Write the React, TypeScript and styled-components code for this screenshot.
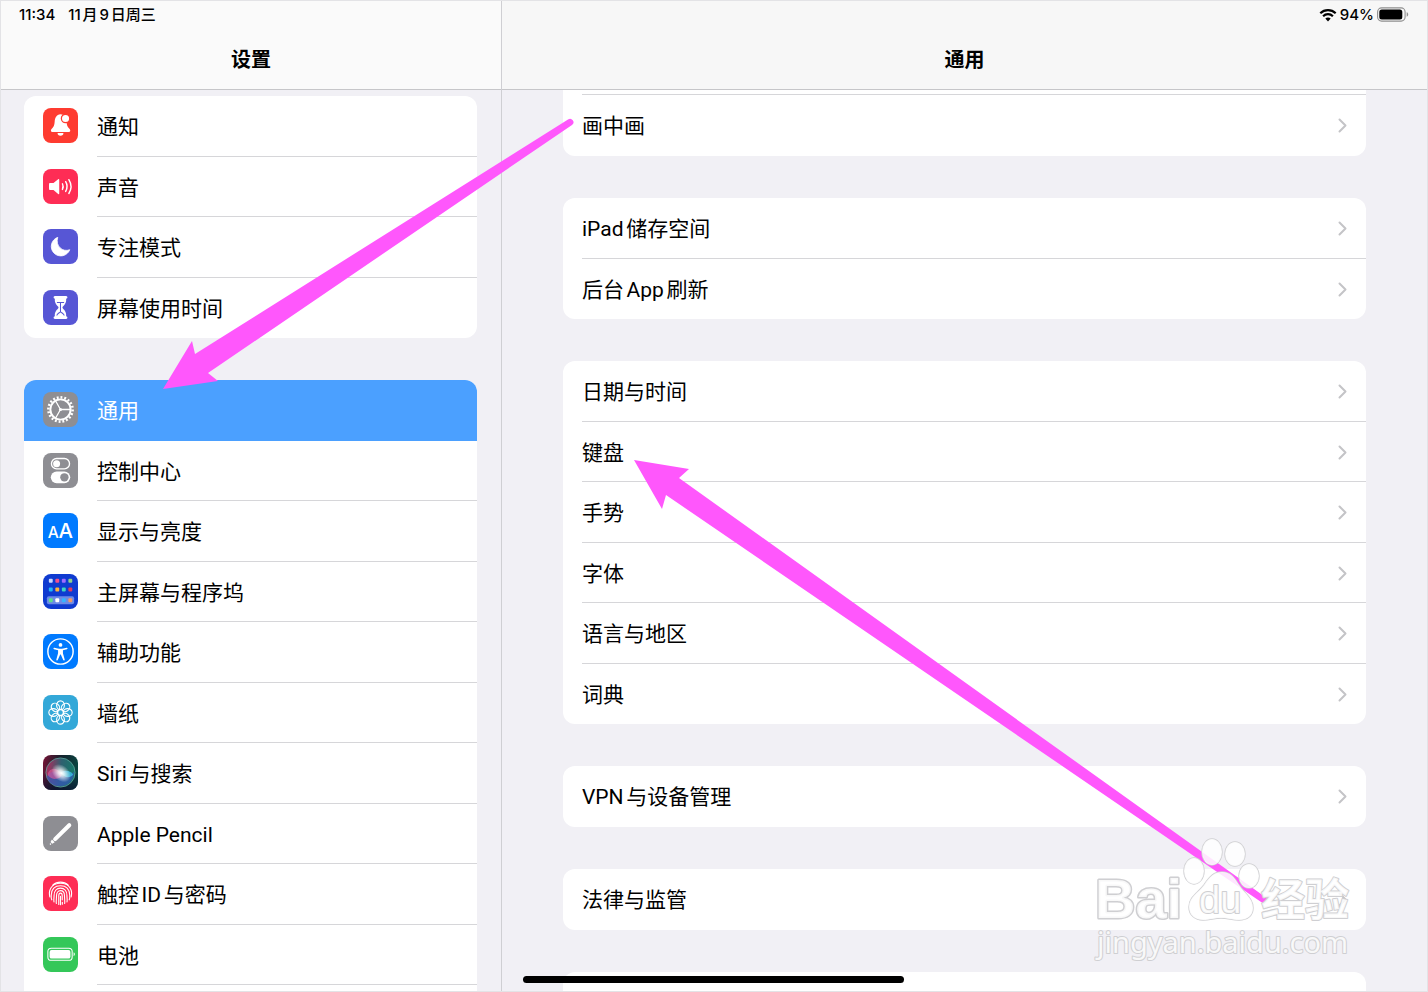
import React from 'react';
import styled, { createGlobalStyle } from 'styled-components';

const GlobalStyle = createGlobalStyle`
  *, *::before, *::after { box-sizing: border-box; }
  body {
    margin: 0;
    font-family: Inter, "Noto Sans CJK SC", sans-serif;
    color: #000;
    -webkit-font-smoothing: antialiased;
  }
  ul { list-style: none; margin: 0; padding: 0; }
`;

const Screen = styled.div`
  position: relative;
  display: flex;
  height: 100vh;
  overflow: hidden;
  border: 1px solid #e3e3e6;
  background: #f1f0f5;
`;

const Sidebar = styled.nav`
  display: flex;
  flex-direction: column;
  flex: 0 0 501px;
  border-right: 1px solid #cfcfd3;
`;

const Detail = styled.main`
  display: flex;
  flex-direction: column;
  flex: 1;
  min-width: 0;
`;

const Header = styled.header<{ $tone: string }>`
  flex: 0 0 89px;
  background: ${(p) => p.$tone};
  border-bottom: 1px solid #c6c6c9;
`;

const StatusBar = styled.div<{ $end?: boolean }>`
  display: flex;
  align-items: center;
  justify-content: ${(p) => (p.$end ? 'flex-end' : 'flex-start')};
  gap: ${(p) => (p.$end ? '3px' : '13px')};
  height: 27px;
  padding: 0 18px;
  font-size: 15px;
  font-weight: 500;
  line-height: 27px;
  text-autospace: normal;
`;

const Title = styled.h1`
  margin: 16px 0 0;
  font-size: 20px;
  font-weight: 700;
  line-height: 32px;
  text-align: center;
`;

const Pane = styled.div<{ $wide?: boolean }>`
  display: flex;
  flex-direction: column;
  flex: 1;
  gap: 42px;
  min-height: 0;
  overflow: hidden;
  padding: ${(p) => (p.$wide ? '0 61px' : '6px 24px 0 23px')};
`;

const Group = styled.ul<{ $continued?: boolean }>`
  flex: none;
  overflow: hidden;
  border-radius: ${(p) => (p.$continued ? '0 0 12px 12px' : '12px')};
  background: #fff;

  &::before {
    content: '';
    display: ${(p) => (p.$continued ? 'block' : 'none')};
    height: 5px;
    margin-left: 19px;
    border-bottom: 1px solid #d6d6d9;
  }
`;

const Item = styled.li`
  height: 60px;
  &:nth-child(odd) { height: 61px; }
`;

const RowLink = styled.a<{ $selected?: boolean }>`
  display: flex;
  align-items: center;
  gap: 19px;
  height: 100%;
  padding-left: 19px;
  background: ${(p) => (p.$selected ? '#4ba0ff' : 'transparent')};
  color: ${(p) => (p.$selected ? '#fff' : '#000')};
  text-decoration: none;
`;

const RowBody = styled.span<{ $line: boolean }>`
  display: flex;
  align-items: center;
  justify-content: space-between;
  flex: 1;
  height: 100%;
  padding: 2px 18px 0 0;
  border-bottom: 1px solid ${(p) => (p.$line ? '#d6d6d9' : 'transparent')};
  font-family: Roboto, "Noto Sans CJK SC", sans-serif;
  font-size: 21px;
  line-height: 28px;
  text-autospace: normal;
`;

const Tile = styled.svg`
  flex: none;
  width: 35px;
  height: 35px;
  margin-bottom: 2px;
  border-radius: 8px;
`;

const Annotations = styled.svg`
  position: absolute;
  top: -1px;
  left: -1px;
  width: 1428px;
  height: 992px;
  pointer-events: none;
`;

const HomeIndicator = styled.div`
  position: absolute;
  left: 522px;
  bottom: 8px;
  width: 381px;
  height: 7px;
  border-radius: 4px;
  background: #000;
`;

const WatermarkText = styled.text<{ $size: number; $weight: number; $face?: string }>`
  font-family: "${(p) => p.$face ?? 'Noto Sans'}", "Noto Sans CJK SC", sans-serif;
  font-size: ${(p) => p.$size}px;
  font-weight: ${(p) => p.$weight};
`;

const Bell = () => (
  <Tile viewBox="0 0 36 36" aria-hidden>
    <rect width="36" height="36" fill="#fe3b30" />
    <path d="M18 6.500c-4.200.4-5.800 3.600-6 7.600-.2 3.600-1 5.300-3.200 7.500-1.200 1.500-.7 3 .8 3h17c1.500 0 2-1.600.8-3-2.200-2.200-3-3.900-3.200-7.500C24 10.100 22.200 6.900 18 6.500z" fill="#fff" />
    <path d="M15 25.800h6a3 2.800 0 0 1-6 0z" fill="#fff" />
    <circle cx="23.200" cy="10.800" r="4.300" fill="#fff" stroke="#fe3b30" strokeWidth="1.300" />
  </Tile>
);

const Speaker = () => (
  <Tile viewBox="0 0 36 36" aria-hidden>
    <rect width="36" height="36" fill="#fe2d55" />
    <path d="M7.500 14.500h3.300l4.800-4c.6-.4 1.100-.1 1.100.6v14c0 .7-.5 1-1.100.6l-4.800-4H7.500c-.9 0-1.300-.5-1.300-1.300v-4.600c0-.8.4-1.300 1.300-1.300z" fill="#fff" />
    <path d="M20 15.200c.9 1.800.9 4 0 5.800M23.300 13.100c1.800 3 1.800 7 0 10M26.600 11c2.700 4.300 2.700 9.900 0 14.200" fill="none" stroke="#fff" strokeWidth="1.500" strokeLinecap="round" />
  </Tile>
);

const Moon = () => (
  <Tile viewBox="0 0 36 36" aria-hidden>
    <rect width="36" height="36" fill="#5756d5" />
    <path d="M15.200 8.600A9.800 9.800 0 1 0 27.500 21.300C20.500 24.300 12.300 17.500 15.200 8.600z" fill="#fff" stroke="#fff" strokeWidth=".8" strokeLinejoin="round" />
  </Tile>
);

const Hourglass = () => (
  <Tile viewBox="0 0 36 36" aria-hidden>
    <rect width="36" height="36" fill="#5756d5" />
    <path d="M12.200 6.200h11.600c1.800 0 1.800 2.500 0 2.700.5 4.300-1.800 6.300-3.300 8-.6.7-.6 1.500 0 2.200 1.500 1.700 3.800 3.700 3.300 8 1.800.2 1.800 2.700 0 2.700H12.200c-1.800 0-1.800-2.500 0-2.700-.5-4.300 1.800-6.300 3.300-8 .6-.7.6-1.500 0-2.200-1.500-1.700-3.800-3.700-3.300-8-1.800-.2-1.800-2.700 0-2.700z" fill="#fff" />
    <path d="M14.300 12.800h7.400M18 13v9.500M14.200 26.200c.3-1.900 2-2.200 3.800-3.800 1.800 1.600 3.500 1.900 3.800 3.800" fill="none" stroke="#5756d5" strokeWidth="1.100" />
  </Tile>
);

const Gear = () => (
  <Tile viewBox="0 0 36 36" aria-hidden>
    <rect width="36" height="36" fill="#8e8e93" />
    <g fill="none" stroke="#fff">
      <circle cx="18" cy="18" r="12.500" strokeWidth="2.600" pathLength="40" strokeDasharray="1 1" />
      <circle cx="18" cy="18" r="10.400" strokeWidth="2" />
      <path d="M18 18h10M18 18l-5-8.700M18 18l-5 8.700" strokeWidth="1.300" />
    </g>
    <circle cx="18" cy="18" r="1.600" fill="#fff" />
  </Tile>
);

const Toggles = () => (
  <Tile viewBox="0 0 36 36" aria-hidden>
    <rect width="36" height="36" fill="#8e8e93" />
    <rect x="8.700" y="5.700" width="18.600" height="10.600" rx="5.300" fill="none" stroke="#fff" strokeWidth="1.400" />
    <circle cx="14" cy="11" r="3.600" fill="#fff" />
    <rect x="8" y="19" width="20" height="12" rx="6" fill="#fff" />
    <circle cx="22" cy="25" r="4.300" fill="#8e8e93" />
  </Tile>
);

const Letters = () => (
  <Tile viewBox="0 0 36 36" aria-hidden>
    <rect width="36" height="36" fill="#007aff" />
    <text x="5" y="26" fill="#fff" fontFamily="Inter, sans-serif" fontSize="16" fontWeight="500">A</text>
    <text x="16" y="26" fill="#fff" fontFamily="Inter, sans-serif" fontSize="21" fontWeight="500">A</text>
  </Tile>
);

const dotRows = [
  { y: 5, colors: ['#c9d6ff', '#f0508c', '#a06bff', '#8fd08a'] },
  { y: 14, colors: ['#22b5f5', '#ffb43c', '#3fd6c0', '#e23a5c'] },
  { y: 25, colors: ['#5fe08a', '#ffffff', '#35b4ff', '#f0986a'] },
];

const HomeGrid = () => (
  <Tile viewBox="0 0 36 36" aria-hidden>
    <rect width="36" height="36" fill="#0f3bd0" />
    <rect x="4" y="23" width="28" height="8" rx="2" fill="#6c8ae6" />
    {dotRows.map((row) =>
      row.colors.map((color, i) => <rect key={color} x={6 + i * 6.700} y={row.y} width="4" height="4" rx="1" fill={color} />)
    )}
  </Tile>
);

const Accessibility = () => (
  <Tile viewBox="0 0 36 36" aria-hidden>
    <rect width="36" height="36" fill="#007aff" />
    <circle cx="18" cy="18" r="13" fill="none" stroke="#fff" strokeWidth="1.500" />
    <circle cx="18" cy="11.200" r="1.900" fill="#fff" />
    <path d="M11.500 14.200l5 .9h3l5-.9c.9-.1 1.100 1.100.2 1.400l-4.200 1v3.200l1.800 6.400c.2 1-1.100 1.400-1.500.5L18.300 21h-.6l-2.500 5.700c-.4.900-1.700.5-1.500-.5l1.800-6.400v-3.200l-4.200-1c-.9-.3-.7-1.500.2-1.400z" fill="#fff" />
  </Tile>
);

const Flower = () => (
  <Tile viewBox="0 0 36 36" aria-hidden>
    <rect width="36" height="36" fill="#33a8d8" />
    <g fill="none" stroke="#fff" strokeWidth="1.200">
      {[0, 45, 90, 135, 180, 225, 270, 315].map((a) => (
        <ellipse key={a} cx="18" cy="10.600" rx="4" ry="4.600" transform={`rotate(${a} 18 18)`} />
      ))}
      <circle cx="18" cy="18" r="3.200" />
    </g>
  </Tile>
);

const Siri = () => (
  <Tile viewBox="0 0 36 36" aria-hidden>
    <defs>
      <linearGradient id="siriBack" x1="0" y1="0" x2="1" y2=".2">
        <stop offset="0" stopColor="#7a1236" />
        <stop offset=".5" stopColor="#14202c" />
        <stop offset="1" stopColor="#0a4440" />
      </linearGradient>
      <linearGradient id="siriShade" x1="0" y1="0" x2="0" y2="1">
        <stop offset=".5" stopColor="#0c1030" stopOpacity="0" />
        <stop offset="1" stopColor="#0c1030" stopOpacity=".7" />
      </linearGradient>
      <linearGradient id="siriOrb" x1="0" y1=".4" x2="1" y2=".5">
        <stop offset="0" stopColor="#b02a5c" />
        <stop offset=".5" stopColor="#2f6070" />
        <stop offset="1" stopColor="#137a68" />
      </linearGradient>
      <radialGradient id="siriGlow">
        <stop offset="0" stopColor="#fff" />
        <stop offset=".3" stopColor="#fff" stopOpacity=".8" />
        <stop offset="1" stopColor="#fff" stopOpacity="0" />
      </radialGradient>
    </defs>
    <rect width="36" height="36" fill="url(#siriBack)" />
    <rect width="36" height="36" fill="url(#siriShade)" />
    <circle cx="18" cy="18" r="15" fill="url(#siriOrb)" stroke="#5fa8a0" strokeWidth=".8" />
    <path d="M4 22c6-8 10-5 14-2s8 4 14-3c0 9-6 15-14 15S5 28 4 22z" fill="#3358b8" opacity=".7" />
    <path d="M6 17c3-4 8-4 12 1s-5 8-9 6-5-4-3-7z" fill="#e45a9c" opacity=".6" />
    <path d="M18 18c5-3 10-2 13 2-3 4-9 4-13-2z" fill="#3cc0e8" opacity=".8" />
    <ellipse cx="19" cy="18" rx="11" ry="8" fill="url(#siriGlow)" transform="rotate(40 18 18)" />
  </Tile>
);

const Pencil = () => (
  <Tile viewBox="0 0 36 36" aria-hidden>
    <rect width="36" height="36" fill="#8e8e93" />
    <path d="M12.500 23.800L27 9.500" stroke="#fff" strokeWidth="4.200" strokeLinecap="round" />
    <path d="M9.200 24.200l2.900 2.900-2.600 1.500-1.800-1.800z" fill="#fff" />
    <circle cx="7.700" cy="28.900" r=".8" fill="#fff" />
  </Tile>
);

const Fingerprint = () => (
  <Tile viewBox="0 0 36 36" aria-hidden>
    <rect width="36" height="36" fill="#fe2d55" />
    <g fill="none" stroke="#fff" strokeWidth="1.150" strokeLinecap="round">
      <path d="M10 9.500c4.500-4.300 11.500-4.300 16 0" />
      <path d="M7 21.500c-1.600-6.500 1.300-14 11-14s12.600 7.500 11 14" />
      <path d="M9 24.500c-.8-1.500-.6-3.300-.5-5C8.800 13.500 12 10 18 10s9.200 3.500 9.500 9.500c.1 1.700.3 3.500-.5 5" />
      <path d="M11.300 26.600c-.5-2 .1-4.300.1-6.600 0-4.500 2.600-7.500 6.600-7.500s6.600 3 6.600 7.500c0 2.300.6 4.600.1 6.600" />
      <path d="M13.700 28.300c-.3-2.500.2-5.400.2-8 0-3.200 1.600-5.300 4.100-5.300s4.100 2.100 4.100 5.300c0 2.600.5 5.500.2 8" />
      <path d="M16.200 29.200V20.500c0-1.800.6-2.900 1.800-2.900s1.800 1.100 1.800 2.900v4M18 21v8.500M19.900 27v2" />
    </g>
  </Tile>
);

const BatteryTile = () => (
  <Tile viewBox="0 0 36 36" aria-hidden>
    <rect width="36" height="36" fill="#34c759" />
    <rect x="5" y="11.500" width="25" height="12.500" rx="3.500" fill="none" stroke="#fff" strokeWidth="1.100" />
    <rect x="6.800" y="13.300" width="21.400" height="8.900" rx="2" fill="#fff" />
    <path d="M31.500 15.800c1.700.6 1.700 3.400 0 4z" fill="#fff" />
  </Tile>
);

const Chevron = () => (
  <svg width="10" height="16" viewBox="0 0 10 16" aria-hidden>
    <path d="M1.500 1.500l6 6-6 6" fill="none" stroke="#c4c4c7" strokeWidth="2" strokeLinecap="round" strokeLinejoin="round" />
  </svg>
);

const Wifi = () => (
  <svg width="18" height="14" viewBox="0 0 18 14" aria-hidden>
    <g fill="none" stroke="#000" strokeWidth="2.200">
      <path d="M1.300 5.200c4.300-4.200 11.100-4.200 15.400 0" />
      <path d="M4.100 8.200c2.700-2.700 7.100-2.700 9.800 0" />
    </g>
    <path d="M9 13.400l-2.700-2.800c1.500-1.400 3.900-1.400 5.400 0z" fill="#000" />
  </svg>
);

const Battery = () => (
  <svg width="32" height="15" viewBox="0 0 32 15" aria-hidden>
    <rect x=".6" y=".9" width="27.500" height="13.200" rx="4" fill="none" stroke="#8f8f8f" strokeWidth="1.100" />
    <rect x="2.300" y="2.600" width="23" height="9.800" rx="2.500" fill="#000" />
    <path d="M29.700 5.300c2 .7 2 3.700 0 4.400z" fill="#8f8f8f" />
  </svg>
);

type SideItem = { label: string; Icon: React.FC; selected?: boolean };

const sideGroups: SideItem[][] = [
  [
    { label: '通知', Icon: Bell },
    { label: '声音', Icon: Speaker },
    { label: '专注模式', Icon: Moon },
    { label: '屏幕使用时间', Icon: Hourglass },
  ],
  [
    { label: '通用', Icon: Gear, selected: true },
    { label: '控制中心', Icon: Toggles },
    { label: '显示与亮度', Icon: Letters },
    { label: '主屏幕与程序坞', Icon: HomeGrid },
    { label: '辅助功能', Icon: Accessibility },
    { label: '墙纸', Icon: Flower },
    { label: 'Siri与搜索', Icon: Siri },
    { label: 'Apple Pencil', Icon: Pencil },
    { label: '触控ID与密码', Icon: Fingerprint },
    { label: '电池', Icon: BatteryTile },
  ],
];

const detailGroups: string[][] = [
  ['画中画'],
  ['iPad储存空间', '后台App刷新'],
  ['日期与时间', '键盘', '手势', '字体', '语言与地区', '词典'],
  ['VPN与设备管理'],
  ['法律与监管'],
];

const Watermark = () => (
  <g fill="#fff" fillOpacity=".85" stroke="#cfcfd2" strokeWidth="1.400" strokeLinejoin="round" paintOrder="stroke">
    <WatermarkText x="1095" y="918" $size={56} $weight={700} $face="Liberation Sans" strokeWidth="3">Bai</WatermarkText>
    <ellipse cx="1194" cy="871" rx="10" ry="13" />
    <ellipse cx="1212" cy="852" rx="10" ry="13" />
    <ellipse cx="1235" cy="854" rx="10" ry="12" />
    <ellipse cx="1249" cy="876" rx="10" ry="12" />
    <path d="M1222 872c8 0 12 5 17 13 6 9 14 13 14 23 0 8-6 12-14 12-7 0-11-2-18-2s-11 2-18 2c-8 0-14-5-14-13 0-10 9-14 15-22 6-9 10-13 18-13z" />
    <WatermarkText x="1199" y="913" $size={38} $weight={400} $face="Liberation Sans" strokeWidth="2">du</WatermarkText>
    <WatermarkText x="1261" y="916" $size={44} $weight={700} strokeWidth="2">经验</WatermarkText>
    <WatermarkText x="1097" y="953" $size={29} $weight={400} strokeWidth="2">jingyan.baidu.com</WatermarkText>
  </g>
);

export default function App() {
  return (
    <>
      <GlobalStyle />
      <Screen>
        <Sidebar aria-label="设置">
          <Header $tone="#fafafa">
            <StatusBar>
              <span>11:34</span>
              <span>11月9日周三</span>
            </StatusBar>
            <Title>设置</Title>
          </Header>
          <Pane>
            {sideGroups.map((group, g) => (
              <Group key={group[0].label}>
                {group.map(({ label, Icon, selected }, i) => (
                  <Item key={label}>
                    <RowLink href="#" $selected={selected} aria-current={selected ? 'page' : undefined}>
                      <Icon />
                      <RowBody $line={!selected && (g === 1 || i < group.length - 1)}>{label}</RowBody>
                    </RowLink>
                  </Item>
                ))}
                {g === 1 && <Item />}
              </Group>
            ))}
          </Pane>
        </Sidebar>
        <Detail>
          <Header $tone="#f7f7f7">
            <StatusBar $end>
              <Wifi />
              <span>94%</span>
              <Battery />
            </StatusBar>
            <Title>通用</Title>
          </Header>
          <Pane $wide>
            {detailGroups.map((group, g) => (
              <Group key={group[0]} $continued={g === 0}>
                {group.map((label, i) => (
                  <Item key={label}>
                    <RowLink href="#">
                      <RowBody $line={i < group.length - 1}>
                        {label}
                        <Chevron />
                      </RowBody>
                    </RowLink>
                  </Item>
                ))}
              </Group>
            ))}
            <Group>
              <Item />
            </Group>
          </Pane>
        </Detail>
        <HomeIndicator />
        <Annotations viewBox="0 0 1428 992" aria-hidden>
          <g fill="#ff57fc">
            <path d="M163 389L192 341L195 354L568 119.500A3.200 3.200 0 0 1 572 125L208 373L218 381Z" />
            <path d="M634 460L689 469L679 478L1268 899L1264 904L666 495L662 509Z" />
          </g>
          <Watermark />
        </Annotations>
      </Screen>
    </>
  );
}
